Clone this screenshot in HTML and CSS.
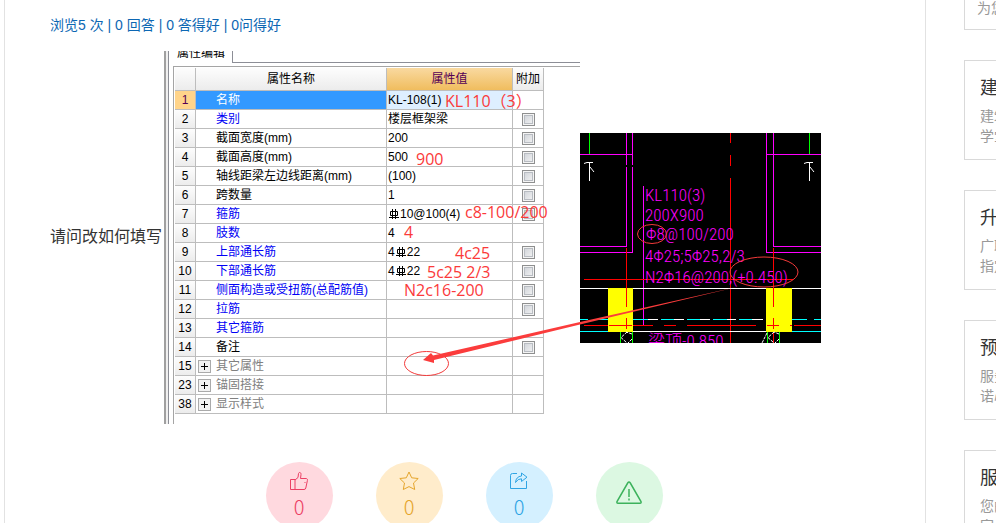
FILE: index.html
```html
<!DOCTYPE html>
<html lang="zh-CN">
<head>
<meta charset="utf-8">
<title>请问改如何填写</title>
<link rel="stylesheet" href="styles.css">
</head>
<body>
<div class="page">
  <main class="main">
    <p class="stats">浏览5 次 | 0 回答 | 0 答得好 | 0问得好</p>

    <div class="question">
      <span class="question-text">请问改如何填写</span>
      <div class="figures">
        <div class="editor">
          <div class="editor-panel">
            <div class="tabs"><span class="tab">属性编辑</span><span class="tab-rest"></span></div>
            <div class="sheet">
              <table class="props">
                <colgroup><col class="c-num"><col class="c-name"><col class="c-value"><col class="c-extra"></colgroup>
                <thead>
                  <tr><th></th><th>属性名称</th><th class="active-head">属性值</th><th>附加</th></tr>
                </thead>
                <tbody>
                  <tr class="selected"><th>1</th><td class="name">名称</td><td>KL-108(1)</td><td></td></tr>
                  <tr><th>2</th><td class="name blue">类别</td><td>楼层框架梁</td><td class="extra"><input type="checkbox" aria-label="类别"></td></tr>
                  <tr><th>3</th><td class="name">截面宽度(mm)</td><td>200</td><td class="extra"><input type="checkbox" aria-label="截面宽度"></td></tr>
                  <tr><th>4</th><td class="name">截面高度(mm)</td><td>500</td><td class="extra"><input type="checkbox" aria-label="截面高度"></td></tr>
                  <tr><th>5</th><td class="name">轴线距梁左边线距离(mm)</td><td>(100)</td><td class="extra"><input type="checkbox" aria-label="轴线距梁左边线距离"></td></tr>
                  <tr><th>6</th><td class="name">跨数量</td><td>1</td><td class="extra"><input type="checkbox" aria-label="跨数量"></td></tr>
                  <tr><th>7</th><td class="name blue">箍筋</td><td><svg class="rebar" viewBox="0 0 12 12"><path d="M4.500 1v10M7.500 1v10M2.500 3.500h7v4h-7zM1 9.500h10"/></svg>10@100(4)</td><td class="extra"><input type="checkbox" aria-label="箍筋"></td></tr>
                  <tr><th>8</th><td class="name blue">肢数</td><td>4</td><td></td></tr>
                  <tr><th>9</th><td class="name blue">上部通长筋</td><td>4<svg class="rebar" viewBox="0 0 12 12"><path d="M4.500 1v10M7.500 1v10M2.500 3.500h7v4h-7zM1 9.500h10"/></svg>22</td><td class="extra"><input type="checkbox" aria-label="上部通长筋"></td></tr>
                  <tr><th>10</th><td class="name blue">下部通长筋</td><td>4<svg class="rebar" viewBox="0 0 12 12"><path d="M4.500 1v10M7.500 1v10M2.500 3.500h7v4h-7zM1 9.500h10"/></svg>22</td><td class="extra"><input type="checkbox" aria-label="下部通长筋"></td></tr>
                  <tr><th>11</th><td class="name blue">侧面构造或受扭筋(总配筋值)</td><td></td><td class="extra"><input type="checkbox" aria-label="侧面构造或受扭筋"></td></tr>
                  <tr><th>12</th><td class="name blue">拉筋</td><td></td><td class="extra"><input type="checkbox" aria-label="拉筋"></td></tr>
                  <tr><th>13</th><td class="name blue">其它箍筋</td><td></td><td></td></tr>
                  <tr><th>14</th><td class="name">备注</td><td></td><td class="extra"><input type="checkbox" aria-label="备注"></td></tr>
                  <tr><th>15</th><td class="name group"><button class="expand" type="button" aria-label="其它属性"></button>其它属性</td><td></td><td></td></tr>
                  <tr><th>23</th><td class="name group"><button class="expand" type="button" aria-label="锚固搭接"></button>锚固搭接</td><td></td><td></td></tr>
                  <tr><th>38</th><td class="name group"><button class="expand" type="button" aria-label="显示样式"></button>显示样式</td><td></td><td></td></tr>
                </tbody>
              </table>
            </div>
          </div>
        </div>

        <svg class="cad" viewBox="0 0 241 210">
          <rect width="241" height="210" fill="#000"/>
          <g fill="none" stroke-width="1" shape-rendering="crispEdges">
            <path stroke="#0f0" d="M9.500 0V21M229.500 0V21M40.500 199V210M52.500 199V210M187.500 199V210M199.500 199V210"/>
            <path stroke="#f0f" d="M0 21.500H52M46.500 0V32M46.500 34V113.500H0M52.500 0V32M52.500 34V119.500H0M241 21.500H187M186.500 0V119.500H241M193.500 0V113.500H241M63.500 53V193"/>
            <path stroke="#f00" d="M150.500 0V10M150.500 22V33M150.500 45V210M4 146.500H213M46.500 115V155M193.500 115V155M193.500 200V210"/>
            <path stroke="#fff" d="M0 155.500H241M53 198.500H186"/>
            <path stroke="#0ff" d="M0 186.500H8M13 186.500H28M53 186.500H68M81 186.500H94M107 186.500H120M133 186.500H147M159 186.500H172M212 186.500H227M234 186.500H241M0 198.500H28M212 198.500H241"/>
            <path stroke="#fff" d="M68 186.500H78M94 186.500H104M120 186.500H130M147 186.500H156M172 186.500H183"/>
            <path stroke="#f00" d="M53 192.500H73M84 192.500H96M107 192.500H176M214 192.500H241M4 192.500H28"/>
          </g>
          <path fill="#ff0" d="M28 155h25v44H28zM186 155h26v44h-26z"/>
          <g fill="none" stroke="#f00" shape-rendering="crispEdges">
            <path d="M46.500 155V174M46.500 185V196M29 192.500H52M193.500 155V174M193.500 185V196M187 192.500H199M210 192.500H212"/>
          </g>
          <g fill="none" stroke="#fff">
            <path d="M4 30.500L7 29.500H13M9.500 29V48M10 34L14 39M224 30.500L227 29.500H233M229.500 29V48M230 34L234 39"/>
            <path stroke-dasharray="3 1" d="M47 199L41 204.500L47 210M52 201L46 199M52 206L48 210M194 199L188 204.500L194 210M199 201L194 199M199 206L195 210M187 200L182 210"/>
          </g>
          <g class="cad-text">
            <text x="65" y="68">KL110(3)</text>
            <text x="65" y="88">200X900</text>
            <text x="66" y="107">Φ8@100/200</text>
            <text x="65" y="129">4Φ25;5Φ25,2/3</text>
            <text x="65" y="150">N2Φ16@200,(+0.450)</text>
            <text x="68" y="214">梁顶-0.850</text>
          </g>
        </svg>

        <svg class="notes" viewBox="0 0 657 373">
          <g class="notes-text">
            <text x="281" y="56">KL110（3）</text>
            <text x="252" y="114">900</text>
            <text x="301" y="167">c8-100/200</text>
            <text x="240" y="187">4</text>
            <text x="291" y="208">4c25</text>
            <text x="263" y="227">5c25 2/3</text>
            <text x="240" y="245">N2c16-200</text>
          </g>
          <g fill="none" stroke="#f33a3a" stroke-width="1">
            <ellipse cx="262.500" cy="312.500" rx="22" ry="12"/>
            <ellipse cx="488" cy="183" rx="14.500" ry="9.500"/>
            <ellipse cx="600" cy="221" rx="34" ry="15"/>
          </g>
          <path fill="#fb3c3c" d="M259 309L267 302L269 304.500L416 271L575 235.500L416 273.500L270 309L270 312Z"/>
        </svg>
      </div>
    </div>

    <div class="actions">
      <button class="action like" type="button" aria-label="点赞">
        <svg width="20" height="20" viewBox="0 0 20 20"><path d="M1.500 8.500H6V18.500H1.500zM6 9L9 6.500L9.500 2.500C10 .8 12.200 1.200 12 3.500L11.500 7.500H17.500Q18.800 8 18.400 9.500L16.800 17Q16.500 18.500 15 18.500H6M15.500 11.500h1"/></svg>
        <span>0</span>
      </button>
      <button class="action star" type="button" aria-label="收藏">
        <svg width="20" height="20" viewBox="0 0 20 20"><path d="M10 1L12.700 6.800L19.200 7.500L14.500 12L15.700 18.500L10 15.600L4.300 18.500L5.500 12L.8 7.500L7.300 6.800z"/></svg>
        <span>0</span>
      </button>
      <button class="action share" type="button" aria-label="分享">
        <svg width="20" height="20" viewBox="0 0 20 20"><path d="M8 2.500H3.500Q1.500 2.500 1.500 4.500V17.500H17.500V10M6.500 11.500Q7 5.500 12.500 5V2L18 6.200L12.500 10.500V7.800Q9 7.500 6.500 11.500z"/></svg>
        <span>0</span>
      </button>
      <button class="action report" type="button" aria-label="举报">
        <svg width="28" height="26" viewBox="0 0 28 26"><path d="M12.700 3Q14 1.200 15.300 3L26 21.500Q26.500 23.200 25 23.200H3Q1.500 23.200 2 21.500z"/><path d="M14 9V17M14 18.500V20.500"/></svg>
      </button>
    </div>
  </main>

  <aside class="side">
    <section class="card card-cut"><p>为您</p></section>
    <section class="card"><h2>建筑</h2><p>建筑<br>学堂</p></section>
    <section class="card"><h2>升级</h2><p>广联<br>指定</p></section>
    <section class="card"><h2>预约</h2><p>服务<br>诺心</p></section>
    <section class="card"><h2>服务</h2><p>您的<br>家</p></section>
  </aside>
</div>
</body>
</html>
```
FILE: styles.css
```css
* { box-sizing: border-box; }

body {
  margin: 0;
  height: 100vh;
  overflow: hidden;
  background: #fff;
  font-family: "Noto Sans CJK SC", sans-serif;
  color: #333;
}

p, h2 { margin: 0; }

button { font-family: inherit; padding: 0; }

.page {
  display: flex;
  gap: 38px;
  padding-left: 4px;
  height: 100vh;
  overflow: hidden;
}

.main {
  flex: 1;
  min-width: 0;
  border: solid #e2e2e2;
  border-width: 0 1px;
  padding-top: 15px;
}

.stats {
  padding-left: 45px;
  font-family: "Liberation Sans", "Noto Sans CJK SC", sans-serif;
  font-size: 14px;
  line-height: 20px;
  color: #0c67b3;
}

.question {
  display: flex;
  align-items: center;
  gap: 2px;
  margin-top: 16px;
  padding-left: 45px;
}

.question-text {
  flex: none;
  margin-bottom: 6px;
  font-size: 16px;
  line-height: 24px;
}

.figures {
  position: relative;
  display: flex;
  align-items: center;
}

/* property editor */
.editor {
  width: 416px;
  padding-left: 2px;
  border-left: 2px solid #a0a0a0;
  background: linear-gradient(90deg, #f0f0f0 3px, #fff 3px);
}

.editor-panel {
  padding-left: 4px;
  border-left: 1px solid #8c8e96;
  font-family: "Liberation Sans", "Noto Sans CJK SC", sans-serif;
  font-size: 12px;
  color: #000;
}

.tabs { display: flex; height: 12px; overflow: hidden; }

.tab {
  flex: none;
  width: 59px;
  padding-left: 4px;
  line-height: 18px;
  margin-top: -7px;
}

.tab-rest {
  flex: 1;
  border: solid #8c8e96;
  border-width: 0 0 1px 1px;
}

.sheet {
  margin-top: 3px;
  padding: 1px 0 10px 1px;
  border: solid #a5a5a5;
  border-width: 1px 0 0 1px;
}

.props {
  border-collapse: separate;
  border-spacing: 0;
  table-layout: fixed;
  width: 369px;
}

.c-num { width: 21px; }
.c-name { width: 191px; }
.c-value { width: 126px; }
.c-extra { width: 31px; }

.props th, .props td {
  height: 19px;
  padding: 0 1px;
  border: solid #bdbdbd;
  border-width: 0 1px 1px 0;
  line-height: 18px;
  font-weight: 400;
  text-align: left;
  white-space: nowrap;
}

.props th {
  padding: 0;
  text-align: center;
  background: linear-gradient(#fdfdfd, #ececec);
}

.props thead th { height: 23px; }

.props .active-head {
  background: linear-gradient(#f9d9a0, #f0bd5e);
  color: #550055;
}

.props td.name { position: relative; padding-left: 20px; }
.props td.blue { color: #0000f5; }
.props td.group { color: #808080; }
.props .selected th { background: #ffd48a; color: #550055; }
.props .selected td:nth-child(3) { background: #deefff; }
.props .selected td.name { background: #3399ff; color: #fff; }
.props td.extra { padding: 0; text-align: center; }

.props input {
  appearance: none;
  display: block;
  width: 13px;
  height: 13px;
  margin: 0 auto;
  border: 1px solid #8e8f8f;
  background: linear-gradient(135deg, #cbcfd5, #f6f6f6);
  box-shadow: inset 0 0 0 1px #f4f4f4, inset 0 0 0 2px #b8bcc2;
}

.rebar {
  width: 12px;
  height: 12px;
  vertical-align: -2px;
  fill: none;
  stroke: #000;
}

.expand {
  position: absolute;
  left: 2px;
  top: 3px;
  width: 13px;
  height: 13px;
  border: 1px solid #aaa;
  background:
    linear-gradient(#000, #000) center / 7px 1px no-repeat,
    linear-gradient(#000, #000) center / 1px 7px no-repeat,
    #f2f2f2;
}

/* drawing */
.cad { display: block; flex: none; width: 241px; height: 210px; }

.cad-text {
  font-family: "Roboto Condensed", Roboto, "Noto Sans CJK SC", sans-serif;
  font-weight: 300;
  font-size: 17px;
  fill: #f0f;
}

.notes {
  position: absolute;
  left: 0;
  top: 0;
  width: 657px;
  height: 373px;
  pointer-events: none;
}

.notes-text {
  font-family: "Open Sans", "Noto Sans CJK SC", sans-serif;
  font-size: 16px;
  fill: #fb3a3a;
}

/* round buttons */
.actions {
  display: flex;
  justify-content: center;
  gap: 43px;
  margin-top: 38px;
  padding-right: 2px;
}

.action {
  display: flex;
  flex-direction: column;
  align-items: center;
  width: 67px;
  height: 67px;
  padding-top: 9px;
  border: 0;
  border-radius: 50%;
  font-size: 20px;
  line-height: 24px;
}

.action span { margin-top: 4px; font-weight: 300; }
.action svg { fill: none; stroke: currentColor; stroke-width: 1; flex: none; }
.like { background: #ffd9df; color: #ec3f64; }
.star { background: #ffeccb; color: #e5a52c; }
.share { background: #d4f0ff; color: #2ea4e4; }
.report { background: #dcf8e2; color: #3cb25c; padding-top: 18px; }
.report svg { stroke-width: 1.5; }

/* side cards */
.side {
  flex: 0 0 32px;
  min-width: 0;
  display: flex;
  flex-direction: column;
  gap: 30px;
}

.card {
  flex: none;
  width: 240px;
  height: 100px;
  padding: 13px 15px 0;
  border: 1px solid #d9d9d9;
}

.card h2 {
  margin-bottom: 7px;
  font-size: 18px;
  font-weight: 400;
  line-height: 24px;
}

.card p { font-size: 14px; line-height: 20px; color: #999; }

.card-cut { height: 30px; padding: 0 12px; border-top: 0; }
.card-cut p { line-height: 14px; }
```
